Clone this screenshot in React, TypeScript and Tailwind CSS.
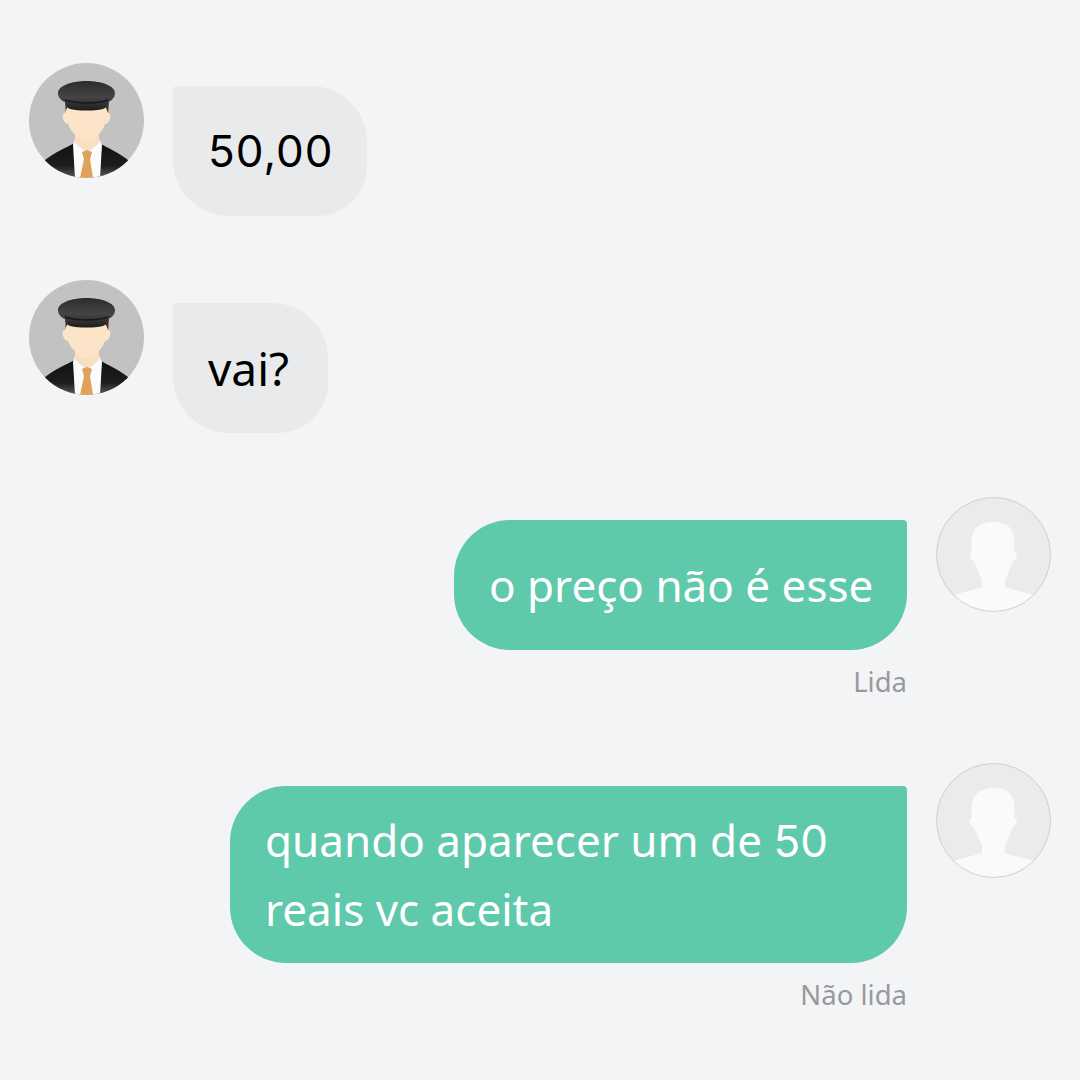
function DriverAvatar({ id }: { id: string }) {
  return (
    <svg viewBox="0 0 115 115" className="w-[115px] h-[115px] shrink-0">
      <defs>
        <clipPath id={`c${id}`}><circle cx="57.5" cy="57.5" r="57.5" /></clipPath>
        <linearGradient id={`s${id}`} x1="0" y1="0" x2="0" y2="1">
          <stop offset="0" stopColor="#111" />
          <stop offset="0.65" stopColor="#1d1d1d" />
          <stop offset="1" stopColor="#5a5a5a" />
        </linearGradient>
        <linearGradient id={`k${id}`} x1="0" y1="0" x2="0" y2="1">
          <stop offset="0" stopColor="#2c2c2c" />
          <stop offset="0.55" stopColor="#454545" />
          <stop offset="1" stopColor="#1c1c1c" />
        </linearGradient>
      </defs>
      <g clipPath={`url(#c${id})`}>
        <rect width="115" height="115" fill="#c2c2c2" />
        <path d="M16 97 C26 89 36 85 46 80 L70 80 C79 85 89 89 99 97 L99 115 L16 115 Z" fill={`url(#s${id})`} />
        <path d="M44 82 L46 76 L70 76 L73 82 L71 115 L46 115 Z" fill="#fbfbfb" />
        <path d="M46 68 L70 68 L70 80 L58 90 L46 80 Z" fill="#f8dfc2" />
        <path d="M53 89 L58 87 L63 89 L61 96 L64 115 L51 115 L55 96 Z" fill="#dfa25a" />
        <path d="M36 38 L37 52 L79 52 L80 38 Z" fill="#4a3320" />
        <path d="M39 44 L76 44 C78 46 78 48 79 50 C81 50 82 52 81 56 C80 59 78 61 76 61 C74 66 72 69 69 72 C65 77 60 78 58 78 C55 78 50 77 47 72 C43 69 41 66 39 61 C37 61 35 59 34 56 C33 52 34 50 36 50 C37 48 37 46 39 44 Z" fill="#fbe4c8" />
        <path d="M29 30 C29 23 42 18 57.5 18 C73 18 86 23 86 30 C86 35 82 38 79 39 C78 42 77 45 74 46 C64 48 51 48 41 46 C38 45 37 42 36 39 C33 38 29 35 29 30 Z" fill={`url(#k${id})`} />
        <path d="M36 37 C48 41 68 41 79 37" stroke="#181818" strokeWidth="1.5" fill="none" />
      </g>
    </svg>
  );
}

function UserAvatar({ id }: { id: string }) {
  return (
    <svg viewBox="0 0 115 115" className="w-[115px] h-[115px] shrink-0">
      <defs>
        <clipPath id={`u${id}`}><circle cx="57.5" cy="57.5" r="57" /></clipPath>
      </defs>
      <g clipPath={`url(#u${id})`}>
        <rect width="115" height="115" fill="#ebebeb" />
        <path d="M18 98 C27 95 37 93 46 90 L46 83 C43 76 40 70 38 64 C34 63 33 59 34 56 L36 54 C35 47 35 40 38 34 C42 27 50 25 58 25 C66 25 73 27 76 34 C79 40 79 47 78 54 L80 56 C82 59 80 63 77 64 C75 70 72 76 69 83 L69 90 C78 93 88 95 97 98 L97 115 L18 115 Z" fill="#fafafa" />
      </g>
      <circle cx="57.5" cy="57.5" r="57" fill="none" stroke="#cfcfcf" strokeWidth="1" />
    </svg>
  );
}

function Incoming({ id, children, width }: { id: string; children: React.ReactNode; width: string }) {
  return (
    <div className="flex items-start pl-[29px]">
      <DriverAvatar id={id} />
      <div className={`ml-[29px] mt-[23px] ${width} pl-[35px] h-[130px] flex items-center bg-[#e9eaec] rounded-tl-[4px] rounded-tr-[56px] rounded-br-[50px] rounded-bl-[56px] text-[44px] text-black whitespace-nowrap`}>
        {children}
      </div>
    </div>
  );
}

function Outgoing({ id, lines, status, width, height }: { id: string; lines: React.ReactNode[]; status: string; width: string; height: string }) {
  return (
    <div className="flex items-start justify-end pr-[29px]">
      <div className="flex flex-col items-end mt-[23px]">
        <div className={`${width} ${height} flex flex-col justify-center pl-[35px] bg-[#5fc9ab] rounded-tl-[56px] rounded-tr-[4px] rounded-br-[56px] rounded-bl-[56px] text-[44px] leading-[68px] text-white whitespace-nowrap`}>
          {lines.map((l, i) => (
            <div key={i}>{l}</div>
          ))}
        </div>
        <div className="mt-[13px] text-[27.5px] leading-[38px] text-[#98999d]">{status}</div>
      </div>
      <div className="ml-[29px]">
        <UserAvatar id={id} />
      </div>
    </div>
  );
}

export default function App() {
  return (
    <div className="w-[1080px] h-[1080px] bg-[#f3f4f6] pt-[63px] flex flex-col overflow-hidden font-['Noto_Sans',sans-serif]">
      <Incoming id="a" width="w-[194px]">
        <span className="font-['Inter',sans-serif] tracking-[1px]">50,00</span>
      </Incoming>
      <div className="mt-[64px]">
        <Incoming id="b" width="w-[155px]">
          <span className="text-[46px]">vai?</span>
        </Incoming>
      </div>
      <div className="mt-[64px]">
        <Outgoing id="c" lines={["o preço não é esse"]} status="Lida" width="w-[453px]" height="h-[130px]" />
      </div>
      <div className="mt-[62px]">
        <Outgoing
          id="d"
          lines={[
            <>quando aparecer um de <span className="font-['Inter',sans-serif]">50</span></>,
            "reais vc aceita",
          ]}
          status="Não lida"
          width="w-[677px]"
          height="h-[177px]"
        />
      </div>
    </div>
  );
}
